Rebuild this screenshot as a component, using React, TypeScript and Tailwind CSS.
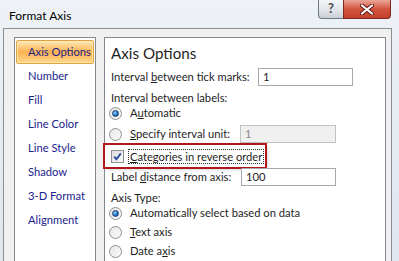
import React from "react";

const navItems = ["Number", "Fill", "Line Color", "Line Style", "Shadow", "3-D Format", "Alignment"];

const Radio = ({ checked = false }: { checked?: boolean }) => (
  <span className="relative flex h-[13px] w-[13px] shrink-0 items-center justify-center rounded-full border border-[#8e8f8f] bg-gradient-to-br from-[#e6e6e6] to-[#fbfbfb]">
    {checked && (
      <span className="h-[7px] w-[7px] rounded-full border border-[#1d3f6e] bg-[radial-gradient(circle_at_35%_35%,#8fd3ff,#1b6fc4_60%,#0d4a8f)]" />
    )}
  </span>
);

const TextBox = ({ value, disabled = false, w }: { value: string; disabled?: boolean; w: string }) => (
  <div
    className={`flex h-[18px] shrink-0 items-center border px-[4px] ${w} ${
      disabled ? "border-[#c2c2c2] bg-[#f0f0f0] text-[#8a8a8a]" : "border-[#a5a9ae] bg-white text-[#1e1e1e]"
    }`}
  >
    {value}
  </div>
);

export default function App() {
  return (
    <div
      className="relative flex h-[261px] w-[399px] flex-col overflow-hidden whitespace-nowrap bg-gradient-to-b from-[#eef2f7] to-[#dfe6ee] text-[11.2px] text-[#1e1e1e]"
      style={{ fontFamily: 'Lato, "Open Sans", sans-serif' }}
    >
      {/* title bar */}
      <div className="flex h-[28px] shrink-0 items-start">
        <div className="pl-[9px] pt-[7px] text-[12px] text-black">Format Axis</div>
        <div className="ml-auto mr-[8px] flex">
          <div className="flex h-[19px] w-[25px] items-center justify-center rounded-bl-[4px] border border-t-0 border-r-0 border-[#6f7a87] bg-gradient-to-b from-[#f4f6f8] via-[#e3e7eb] to-[#c9cfd6] text-[13px] font-bold text-[#4a4a4a]">
            ?
          </div>
          <div className="flex h-[19px] w-[48px] items-center justify-center rounded-br-[4px] border border-t-0 border-[#7a2a22] bg-gradient-to-b from-[#e9a597] via-[#d2533f] to-[#c6402b]">
            <svg width="14" height="11" viewBox="0 0 14 11">
              <path d="M2 1.5 L12 9.5 M12 1.5 L2 9.5" stroke="#5a1a14" strokeWidth="4" strokeLinecap="round" />
              <path d="M2 1.5 L12 9.5 M12 1.5 L2 9.5" stroke="#ffffff" strokeWidth="2.2" strokeLinecap="round" />
            </svg>
          </div>
        </div>
      </div>

      {/* client area */}
      <div className="ml-[3px] mr-[7px] flex flex-1 gap-[8px] border border-b-0 border-[#8a8f96] bg-[#f0f0f0] pl-[10px] pr-[5px] pt-[8px]">
        {/* category list */}
        <div className="flex w-[82px] shrink-0 flex-col border border-b-0 border-[#828790] bg-white p-[1px]">
          <div className="mt-[1px] flex h-[24px] items-center rounded-[2px] border border-[#e0a23c] bg-gradient-to-b from-[#fde9b4] via-[#fbb24e] to-[#fdd88a] pl-[11px] text-[#1b1f8a] shadow-[inset_0_0_0_1px_rgba(255,240,200,0.7)]">
            Axis Options
          </div>
          {navItems.map((item) => (
            <div key={item} className="flex h-[24px] items-center pl-[12px] text-[#1b238c]">
              {item}
            </div>
          ))}
        </div>

        {/* options panel */}
        <div className="flex flex-1 flex-col border border-b-0 border-[#828790] bg-white pl-[6px]">
          <div className="mt-[5px] h-[20px] text-[15.2px] leading-[20px]">Axis Options</div>

          <div className="mt-[5px] flex h-[18px] items-center">
            <span className="w-[147px]">
              Interval <u>b</u>etween tick marks:
            </span>
            <TextBox value="1" w="w-[95px]" />
          </div>

          <div className="mt-[5px] flex h-[14px] items-center">Interval between labels:</div>

          <div className="mt-[1px] flex h-[14px] items-center">
            <span className="ml-[-2px]">
              <Radio checked />
            </span>
            <span className="ml-[8px]">
              A<u>u</u>tomatic
            </span>
          </div>

          <div className="mt-[5px] flex h-[18px] items-center">
            <span className="ml-[-2px]">
              <Radio />
            </span>
            <span className="ml-[8px] w-[110px]">
              <u>S</u>pecify interval unit:
            </span>
            <TextBox value="1" disabled w="w-[96px]" />
          </div>

          <div className="ml-[-6px] mt-[2px] flex h-[22px] w-[160px] items-center pl-[6px] shadow-[2px_2px_4px_rgba(0,0,0,0.25)] outline-2 outline-[#b2161c]">
            <span className="flex h-[13px] w-[13px] shrink-0 items-center justify-center border border-[#8e8f8f] bg-gradient-to-br from-[#dcdcdc] to-[#fafafa]">
              <svg width="9" height="9" viewBox="0 0 9 9">
                <path d="M1.2 4.6 L3.4 7.2 L7.8 1.4" fill="none" stroke="#2b4a9b" strokeWidth="1.8" />
              </svg>
            </span>
            <span className="ml-[4px] border border-dotted border-[#333] px-[1px] leading-[13px]">
              <u>C</u>ategories in reverse order
            </span>
          </div>

          <div className="mt-[1px] flex h-[18px] items-center">
            <span className="w-[130px]">
              Label <u>d</u>istance from axis:
            </span>
            <TextBox value="100" w="w-[95px]" />
          </div>

          <div className="mt-[5px] flex h-[14px] items-center">Axis Type:</div>

          <div className="mt-[1px] flex h-[14px] items-center">
            <span className="ml-[-2px]">
              <Radio checked />
            </span>
            <span className="ml-[8px]">
              Automatically select based on data
            </span>
          </div>
          <div className="mt-[5px] flex h-[14px] items-center">
            <span className="ml-[-2px]">
              <Radio />
            </span>
            <span className="ml-[8px]">
              <u>T</u>ext axis
            </span>
          </div>
          <div className="mt-[5px] flex h-[14px] items-center">
            <span className="ml-[-2px]">
              <Radio />
            </span>
            <span className="ml-[8px]">
              Date a<u>x</u>is
            </span>
          </div>
        </div>
      </div>
    </div>
  );
}
